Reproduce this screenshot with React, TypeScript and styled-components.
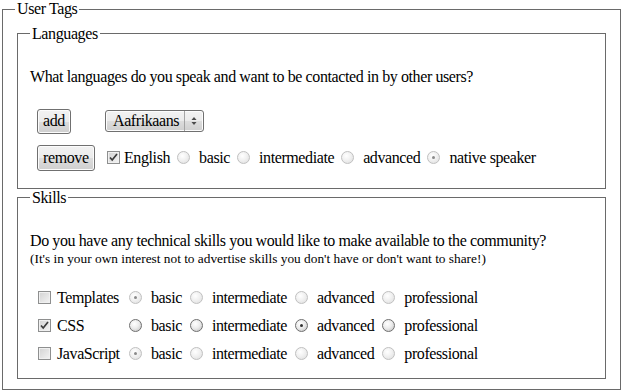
import React from 'react'
import styled, { createGlobalStyle } from 'styled-components'

const GlobalStyle = createGlobalStyle`
  body {
    margin: 0;
    background: #ffffff;
    color: #000000;
    font-family: "Liberation Serif", "Times New Roman", serif;
    font-size: 16px;
    letter-spacing: -0.4px;
  }
`

const Group = styled.fieldset`
  margin: 0 2px;
  padding: 6.6px 12px 10px;
  border: 1px solid #6a6a6a;
  min-width: 0;
`

const Legend = styled.legend`
  padding: 0 2px;
  line-height: 18px;
`

const Question = styled.p`
  margin: 18.5px 0 16px;
  line-height: 18px;
`

const Hint = styled.span`
  display: block;
  font-size: 13.33px;
  line-height: 17px;
  letter-spacing: 0;
`

const LangGrid = styled.div`
  display: grid;
  grid-template-columns: 68px auto;
  row-gap: 11px;
  align-items: center;
  padding: 7px 0 7px 7px;
`

const Button = styled.span<{ $h: number }>`
  justify-self: start;
  display: inline-flex;
  align-items: center;
  height: ${({ $h }) => $h - 2}px;
  padding: 0 5px;
  border: 1px solid #707070;
  border-radius: 3px;
  background: linear-gradient(#f2f2f2 0%, #ebebeb 50%, #dddddd 50%, #cfcfcf 100%);
  box-shadow: inset 0 0 0 1px #fcfcfc;
`

const Select = styled.span`
  display: inline-flex;
  align-items: stretch;
  justify-self: start;
  height: 20px;
  border: 1px solid #707070;
  border-radius: 3px;
  background: linear-gradient(#f2f2f2 0%, #ebebeb 50%, #dddddd 50%, #cfcfcf 100%);
  box-shadow: inset 0 0 0 1px #fcfcfc;
`

const SelectText = styled.span`
  display: flex;
  align-items: center;
  padding: 0 5px 0 7px;
  border-right: 1px solid #a5a5a5;
`

const SelectArrows = styled.span`
  display: flex;
  align-items: center;
  justify-content: center;
  width: 18px;
`

const Line = styled.div`
  display: flex;
  align-items: center;
  white-space: nowrap;
`

const Box = styled.span<{ $left: number; $gap: number }>`
  position: relative;
  display: inline-block;
  flex: none;
  width: 11px;
  height: 11px;
  margin: 0 ${({ $gap }) => $gap}px 0 ${({ $left }) => $left}px;
  border: 1px solid #8e8f8f;
  background: linear-gradient(135deg, #d2d2d2 0%, #e6e6e6 60%, #f4f4f4 100%);
  box-shadow: inset 0 0 0 1px #f0f0f0;

  svg {
    position: absolute;
    left: 0;
    top: 0;
  }
`

const Dot = styled.span<{ $on: boolean; $off: boolean }>`
  display: inline-flex;
  align-items: center;
  justify-content: center;
  flex: none;
  width: 11px;
  height: 11px;
  margin-right: 9px;
  border-radius: 50%;
  border: 1px solid ${({ $off }) => ($off ? '#c0c0c0' : '#6f6f6f')};
  background: ${({ $off }) =>
    $off
      ? 'radial-gradient(circle at 40% 35%, #ffffff 0%, #f1f1f1 45%, #dcdcdc 100%)'
      : 'radial-gradient(circle at 40% 35%, #ffffff 0%, #ececec 45%, #bdbdbd 100%)'};

  &::after {
    content: '';
    display: ${({ $on }) => ($on ? 'block' : 'none')};
    width: 3px;
    height: 3px;
    border-radius: 50%;
    background: ${({ $off }) => ($off ? '#8a8a8a' : '#333333')};
  }
`

const Option = styled.span`
  display: inline-flex;
  align-items: center;
  margin-left: 7px;
`

const SkillGrid = styled.div`
  display: grid;
  grid-template-columns: 95px repeat(4, auto);
  justify-content: start;
  grid-auto-rows: 28px;
  align-items: center;
  padding: 1px 0 0 4px;
  white-space: nowrap;
`

const Cell = styled.span`
  display: inline-flex;
  align-items: center;
  padding-right: 8px;
`

const Check = () => (
  <svg width="11" height="11" viewBox="0 0 11 11">
    <path d="M2 5.5 L4.2 8 L9 2" fill="none" stroke="#3a3a3a" strokeWidth="1.7" />
  </svg>
)

const Tick = ({ on, left, gap }: { on: boolean; left: number; gap: number }) => (
  <Box $left={left} $gap={gap}>{on && <Check />}</Box>
)

const levels = ['basic', 'intermediate', 'advanced', 'professional']

const skills = [
  { name: 'Templates', on: false, level: 0 },
  { name: 'CSS', on: true, level: 2 },
  { name: 'JavaScript', on: false, level: 0 },
]

export default function App() {
  return (
    <>
      <GlobalStyle />
      <Group>
        <Legend>User Tags</Legend>

        <Group>
          <Legend>Languages</Legend>
          <Question>What languages do you speak and want to be contacted in by other users?</Question>
          <LangGrid>
            <Button $h={25}>add</Button>
            <Select>
              <SelectText>Aafrikaans</SelectText>
              <SelectArrows>
                <svg width="6" height="10" viewBox="0 0 6 10">
                  <path d="M3 1 L5.5 4 L0.5 4 Z" fill="#4a4a4a" />
                  <path d="M3 9 L5.5 6 L0.5 6 Z" fill="#4a4a4a" />
                </svg>
              </SelectArrows>
            </Select>
            <Button $h={26}>remove</Button>
            <Line>
              <Tick on left={2} gap={4} />
              English
              {['basic', 'intermediate', 'advanced', 'native speaker'].map((l, i) => (
                <Option key={l}>
                  <Dot $on={i === 3} $off />
                  {l}
                </Option>
              ))}
            </Line>
          </LangGrid>
        </Group>

        <Group>
          <Legend>Skills</Legend>
          <Question>
            Do you have any technical skills you would like to make available to the community?
            <Hint>(It's in your own interest not to advertise skills you don't have or don't want to share!)</Hint>
          </Question>
          <SkillGrid>
            {skills.map(s => (
              <React.Fragment key={s.name}>
                <Line>
                  <Tick on={s.on} left={4} gap={6} />
                  {s.name}
                </Line>
                {levels.map((l, i) => (
                  <Cell key={l}>
                    <Dot $on={s.level === i} $off={!s.on} />
                    {l}
                  </Cell>
                ))}
              </React.Fragment>
            ))}
          </SkillGrid>
        </Group>
      </Group>
    </>
  )
}
